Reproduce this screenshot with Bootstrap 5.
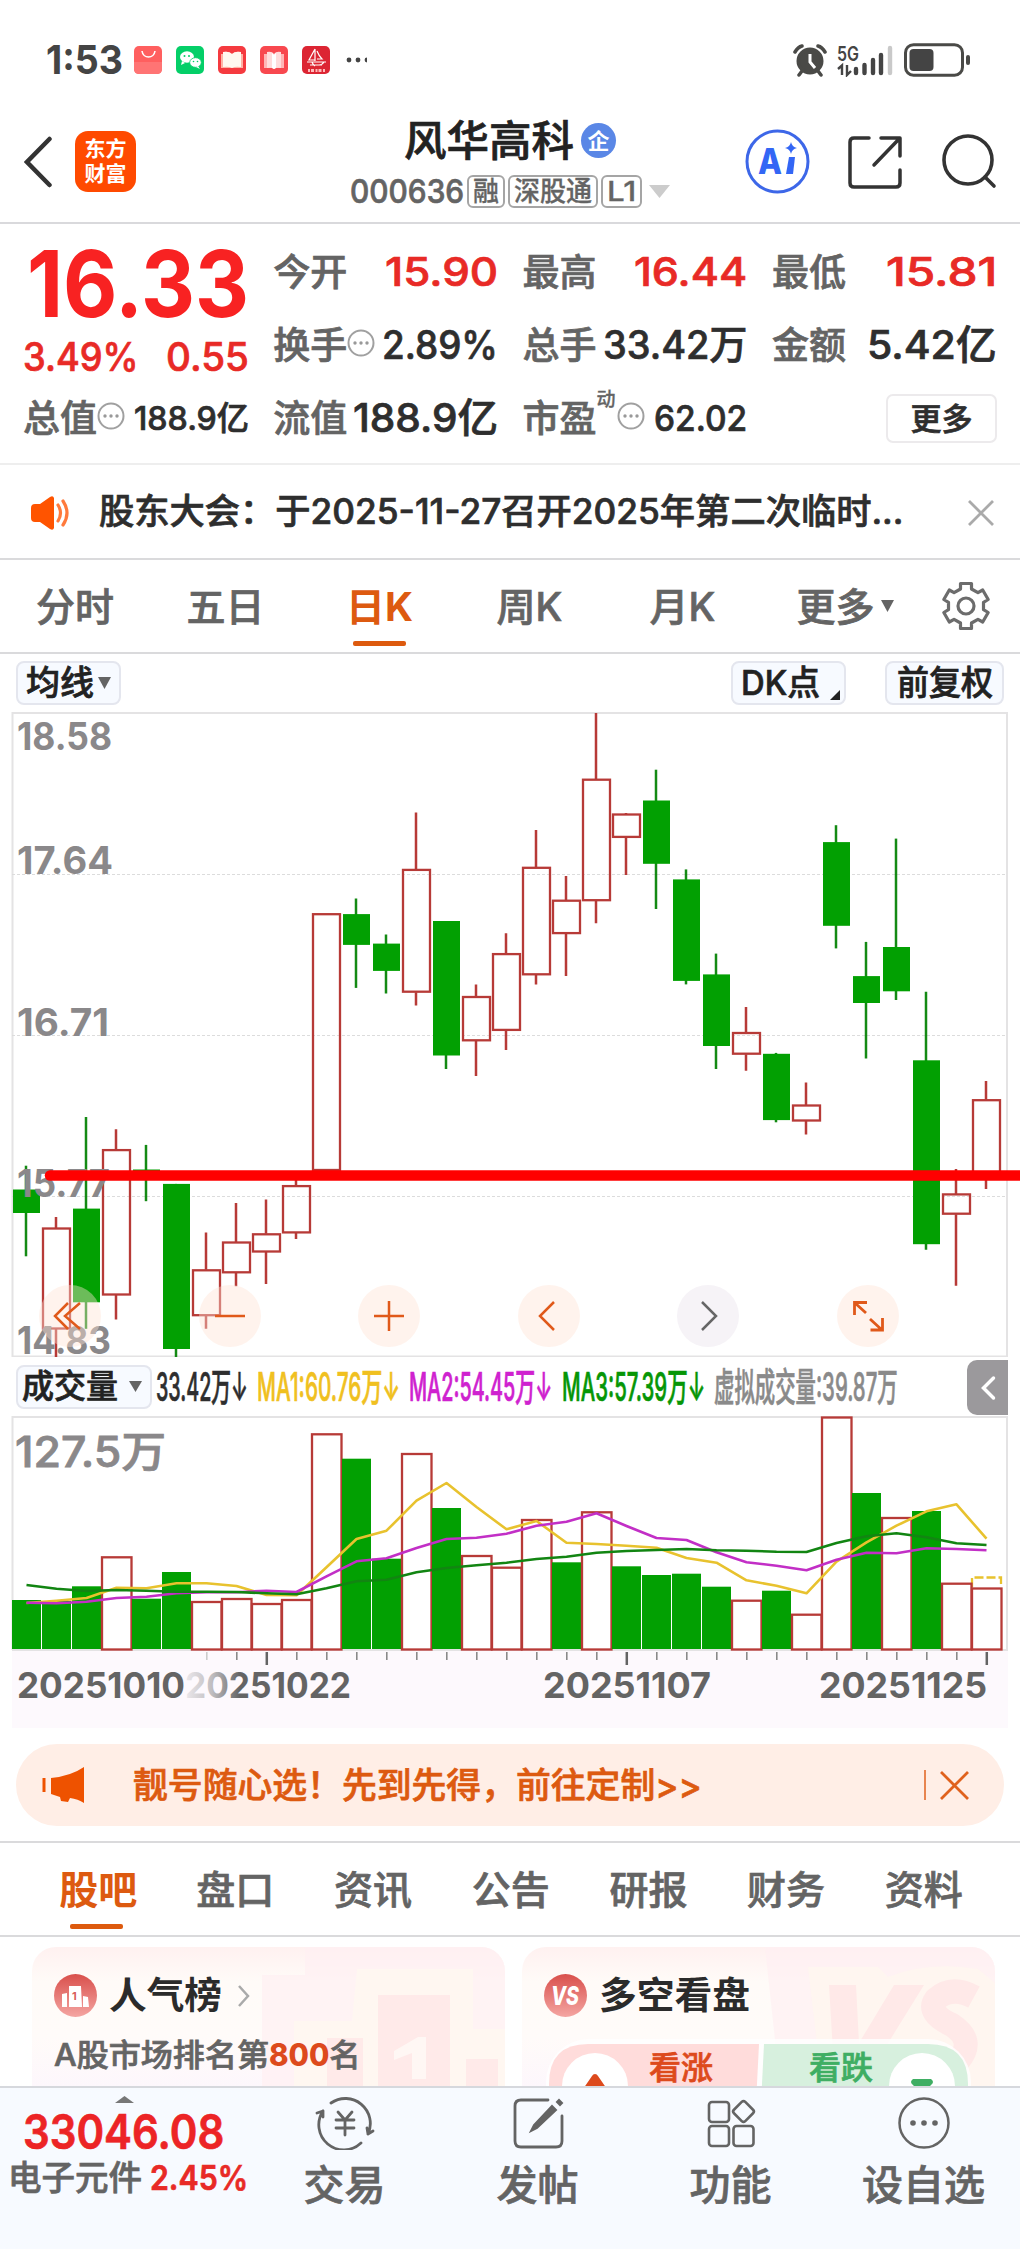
<!DOCTYPE html>
<html lang="zh-CN">
<head>
<meta charset="utf-8">
<meta name="viewport" content="width=device-width, initial-scale=1">
<title>风华高科 000636</title>
<link href="https://cdn.jsdelivr.net/npm/bootstrap@5.3.0/dist/css/bootstrap.min.css" rel="stylesheet">
<style>
body{width:1020px;height:2250px;overflow:hidden;background:#fff;color:#2e2e2e;font-family:Inter,"Noto Sans CJK SC",sans-serif;font-weight:500;line-height:1;-webkit-text-stroke:.7px currentColor}
svg,h2,.status,.fw-bold,.applogo,.ent,.big,.n800{-webkit-text-stroke:0}
.fit{display:inline-block;white-space:nowrap;transform-origin:0 50%;flex:none}
svg{display:block;flex:none}
.c-up{color:#e82a26}.c-grey{color:#646464}.c-orange{color:#dd5a10}
.status{height:100px;padding:19px 50px 0 46px;color:#444;font-size:40px;font-weight:700}
.topbar{height:124px;grid-template-columns:330px 360px 330px;border-bottom:2px solid #d9d9dc;padding-top:1px}
.applogo{width:61px;height:61px;border-radius:13px;background:#ff4a00;color:#fff;font-size:21px;font-weight:700;line-height:25px;margin-left:23px;padding-top:5px}
.namecol{padding-top:4px}
.stockname{font-size:42px;color:#222}
.ent{width:35px;height:35px;background:#5a87e6;color:#fff;font-size:22px;font-weight:700;margin-left:7px}
.code{font-size:33px;color:#646464;gap:3px;margin-top:13px}
.tagbox{height:33px;border:2px solid #a5a5a5;border-radius:6px;font-size:27px;-webkit-text-stroke-width:.3px}
.topicons{padding-right:23px}
.aiicon{margin-right:38px}.shareicon{margin-right:39px}
.quotes{height:241px;border-bottom:2px solid #eee;padding:16px 24px 0 23px}
.qgrid{grid-template-columns:226px 225px 225px 225px;column-gap:24.3px;grid-template-rows:64px 82px 64px}
.lbl{font-size:37px;color:#646464}.val{font-size:40px}.big{font-size:92px;font-weight:700;color:#f82222}
.fs-33{font-size:33px}.fs-36{font-size:36px}
.dyn{font-size:19px;color:#646464;margin-bottom:38px;width:21px;-webkit-text-stroke-width:.3px}
.dynicon{margin-left:-1px}
.morebtn{width:111px;height:49px;border:2px solid #eceaec;border-radius:7px;font-size:31px}
.notice{height:95px;border-bottom:2px solid #dadadc;padding:0 26px 0 30px;font-size:35px}
.notice svg{margin-top:3px}
.ktabs{height:94px;border-bottom:2px solid #dadadc;grid-template-columns:150px 151px 161px 135px 171px 154px 88px;font-size:39px;color:#646464}
.k-on{right:2px}
.moretab{gap:6px}
.barmark{position:absolute;bottom:6px;width:53px;height:5px;border-radius:2px;background:#dd5a0e}
.tools{height:53px;padding:7px 16px 0}
.pill{height:44px;background:#f7faff;border:2px solid #e4e6ee;border-radius:8px;font-size:34px;color:#222}
.dk{width:115px}.dkcorner{position:absolute;right:4px;bottom:3px}.qfq{width:119px;margin-left:39px}
.chartbtn{width:62px;height:62px;background:rgba(255,226,213,.42)}
.chartbtn.off{background:#f6f3f7}
.ctrls{position:absolute;left:39px;right:121px;top:577.5px}
.ind{height:59px;padding-left:16px;font-size:39px;gap:9px}
.volbtn{width:136px;font-size:33px}.volnow{margin-left:-5px}
.ma1{color:#f0c020}.ma2{color:#cf22cf}.ma3{color:#069606}.ma4{color:#8a8a8a}
.foldtab{width:41px;height:55px;background:#9b999c;border-radius:10px 0 0 10px;margin-right:12px;margin-top:2px}
.axis{fill:#8a888a;font-weight:700;font-size:38px}
.dates{fill:#646464;font-weight:700;font-size:36px}
.promo{height:82px;margin:7px 16px 15px;border-radius:41px;background:#ffeee6;font-size:35px;padding:0 34px 0 25px}
.promotext{margin-left:47px}
.ntabs{height:96px;border-top:2px solid #dadadc;border-bottom:2px solid #dadadc;grid-template-columns:166.5px repeat(6,137.7px);font-size:39px;color:#646464}
.n-on{padding-left:30px}.nb{left:70px}
.feed{height:149px;padding:10px 25px 0 32px;overflow:hidden}
.tile{width:473px;height:139px;border-radius:24px 24px 0 0;background:linear-gradient(#fff1f0,#fffbf8 35px,#fffbf9 90px,#fdf7fc 139px);overflow:hidden;padding:27px 22px 0}
.tile h2{font-size:37px;font-weight:700;margin:0 0 0 12px;line-height:43px;color:#2b2b2b}
.rankline{font-size:31px;margin-top:22px}
.n800{font-weight:800;color:#dd4a1c}
.deco{position:absolute;left:0;top:0}
.dock{height:163px;border-top:2px solid #d6d8dd;background:#f7faff;color:#646464}
.dockitem{width:193px;font-size:41px;padding-top:8px;gap:15px}
.idx{width:248px;padding-top:8px}.idxnum{font-size:48px;font-weight:600;color:#ec2426;margin-top:5px}
.idxsub{font-size:34px;margin-top:5px;gap:8px;padding-left:9px}.pct{font-weight:600}
</style>
</head>
<body>
<div class="status d-flex align-items-center">
  <span class="fit" data-w="77">1:53</span>
  <svg class="ms-2" width="236" height="30" viewBox="131 44 236 30">
    <rect x="134" y="45" width="28" height="28" rx="5" fill="#ff5f5f"/><path d="M134 61h28v7q0 5-5 5h-18q-5 0-5-5z" fill="#ff7474"/><path d="M142 50c1 8 12 8 13 0" fill="none" stroke="#fff" stroke-width="1.6"/>
    <rect x="176" y="45" width="28" height="28" rx="5" fill="#04cf68"/><ellipse cx="187" cy="56" rx="7" ry="5.8" fill="#fff"/><ellipse cx="195.500" cy="61.500" rx="5.800" ry="4.800" fill="#fff" stroke="#04cf68" stroke-width=".8"/><path d="M182 60l-1 4 4-2M198 65l2 3-4-2" fill="#fff"/><g fill="#04cf68"><circle cx="184.500" cy="55" r="1"/><circle cx="189" cy="55" r="1"/><circle cx="193.500" cy="60.500" r=".8"/><circle cx="197.500" cy="60.500" r=".8"/></g>
    <rect x="218" y="45" width="28" height="28" rx="5" fill="#f53a3f"/><path d="M221 53h3v-2q5-1 8 2 3-3 8-2v2h3v14h-22z" fill="#ffb3a5"/><path d="M223 51q6-1 9 2 3-3 9-2v15q-6-1-9 1-3-2-9-1z" fill="#fff8ef"/>
    <rect x="260" y="45" width="28" height="28" rx="5" fill="#f8484f"/><path d="M264 53h20v14h-20z" fill="#ffb6b6"/><path d="M267 51q5-1 7 2 2-3 7-2v16q-5-1-7 1-2-2-7-1z" fill="#ffdcdc"/><path d="M272 52l2 2 2-2v15l-2 1-2-1z" fill="#fff"/>
    <rect x="302" y="45" width="28" height="28" rx="5" fill="#dc2533"/><path d="M315 48v12M315 48l-6 11h6M317 50q2 5 5 8h-5M307 61h19M310 64h12M312 61q1 3 3 4M319 64q3 0 5-3" fill="none" stroke="#fff" stroke-width="1.200"/><path d="M308 69.500h17" stroke="#ffb9b9" stroke-width="3" stroke-dasharray="2 1 3 1.500"/>
    <g fill="#444"><circle cx="349" cy="59" r="2.400"/><circle cx="358" cy="59" r="2.400"/><circle cx="367" cy="59" r="2.400"/></g>
  </svg>
  <svg class="ms-auto" width="178" height="34" viewBox="791 42 178 34">
    <circle cx="809" cy="60" r="11" fill="none" stroke="#4a4a47" stroke-width="5"/><circle cx="809" cy="60" r="10" fill="#4a4a47"/><path d="M809 53v8l5 6" fill="none" stroke="#fff" stroke-width="3"/><path d="M794 51q3-5 7-6M824 51q-3-5-7-6M801 70l-3 4M817 70l3 4" stroke="#4a4a47" stroke-width="3.500" fill="none" stroke-linecap="round"/>
    <text x="836" y="59.500" font-size="20" font-weight="600" fill="#444" textLength="22" lengthAdjust="spacingAndGlyphs">5G</text>
    <path d="M837 68l4-3.500V74M850 70l-4 4V64" stroke="#444" stroke-width="2.400" fill="none"/>
    <g stroke="#444" stroke-width="4.400" stroke-linecap="round"><path d="M855 68v4M863.500 64v8M872 59v13M880 54v18"/><path d="M889 47v25" stroke="#c9c9c9"/></g>
    <rect x="904.500" y="43.700" width="57" height="30.500" rx="8" fill="none" stroke="#4a4a47" stroke-width="3"/><rect x="908.500" y="48" width="24" height="22" rx="4" fill="#444"/><path d="M967 56v6" stroke="#4a4a47" stroke-width="4" stroke-linecap="round"/>
  </svg>
</div>

<header class="topbar d-grid align-items-center">
  <div class="d-flex align-items-center ps-4">
    <svg width="28" height="52" viewBox="0 0 28 52"><path d="M25.500 3L3 26l22.500 23" fill="none" stroke="#333" stroke-width="4.500" stroke-linecap="round"/></svg>
    <div class="applogo text-center">东方<br>财富</div>
  </div>
  <div class="namecol d-flex flex-column align-items-center">
    <div class="d-flex align-items-center"><span class="fit stockname" data-w="170">风华高科</span><span class="ent rounded-circle d-flex align-items-center justify-content-center">企</span></div>
    <div class="code d-flex align-items-center"><span class="fit" data-w="114">000636</span><span class="tagbox d-flex align-items-center px-1"><span class="fit" data-w="26">融</span></span><span class="tagbox d-flex align-items-center px-1"><span class="fit" data-w="78">深股通</span></span><span class="tagbox d-flex align-items-center px-1"><span class="fit" data-w="29">L1</span></span>
    <svg class="ms-1" width="21" height="13" viewBox="0 0 21 13"><path d="M0 0h21L10.500 13z" fill="#ccc"/></svg></div>
  </div>
  <div class="topicons d-flex align-items-center justify-content-end">
    <svg class="aiicon" width="65" height="65" viewBox="0 0 65 65"><circle cx="32.500" cy="32.500" r="30.500" fill="none" stroke="#3d67e8" stroke-width="3"/><text x="13" y="45" font-size="35" font-weight="800" fill="#3366f5" textLength="24" lengthAdjust="spacingAndGlyphs">A</text><path d="M44 28h6l-2 17h-7z" fill="#3366f5"/><path d="M46 13q1 5 6 6-5 1-6 6-1-5-6-6 5-1 6-6z" fill="#3366f5"/></svg>
    <svg class="shareicon" width="54" height="54" viewBox="0 0 54 54" fill="none" stroke="#333" stroke-width="3.500" stroke-linecap="round" stroke-linejoin="round"><path d="M21 3H6Q2 3 2 7v41q0 4 4 4h42q4 0 4-4V35M33 3h19v18M51 4L26 30"/></svg>
    <svg width="56" height="56" viewBox="0 0 56 56" fill="none" stroke="#333" stroke-width="3.600" stroke-linecap="round"><circle cx="27" cy="26" r="24"/><path d="M44 43l9 9"/></svg>
  </div>
</header>

<section class="quotes">
  <div class="qgrid d-grid align-items-center">
    <div class="d-flex ps-1"><span class="fit big mt-4" data-w="222">16.33</span></div>
    <div class="d-flex align-items-center justify-content-between"><span class="fit lbl" data-w="74">今开</span><span class="fit val c-up" data-w="113">15.90</span></div>
    <div class="d-flex align-items-center justify-content-between"><span class="fit lbl" data-w="74">最高</span><span class="fit val c-up" data-w="113">16.44</span></div>
    <div class="d-flex align-items-center justify-content-between"><span class="fit lbl" data-w="74">最低</span><span class="fit val c-up" data-w="111">15.81</span></div>

    <div class="d-flex align-items-center justify-content-between c-up val pt-4"><span class="fit" data-w="116">3.49%</span><span class="fit" data-w="83">0.55</span></div>
    <div class="d-flex align-items-center justify-content-between"><span class="d-flex align-items-center"><span class="fit lbl" data-w="74">换手</span><svg class="mb-1" width="28" height="28" viewBox="0 0 28 28"><use href="#info"/></svg></span><span class="fit val" data-w="116">2.89%</span></div>
    <div class="d-flex align-items-center justify-content-between"><span class="fit lbl" data-w="74">总手</span><span class="fit val" data-w="144">33.42万</span></div>
    <div class="d-flex align-items-center justify-content-between"><span class="fit lbl" data-w="74">金额</span><span class="fit val" data-w="130">5.42亿</span></div>

    <div class="d-flex align-items-center justify-content-between"><span class="d-flex align-items-center"><span class="fit lbl" data-w="74">总值</span><svg class="mb-1" width="28" height="28" viewBox="0 0 28 28"><g id="info"><circle cx="14" cy="14" r="12.500" fill="none" stroke="#a0a0a0" stroke-width="2"/><g fill="#999"><circle cx="8" cy="14" r="1.700"/><circle cx="14" cy="14" r="1.700"/><circle cx="20" cy="14" r="1.700"/></g></g></svg></span><span class="fit fs-33" data-w="115">188.9亿</span></div>
    <div class="d-flex align-items-center justify-content-between"><span class="fit lbl" data-w="74">流值</span><span class="fit val" data-w="145">188.9亿</span></div>
    <div class="d-flex align-items-center justify-content-between"><span class="d-flex align-items-center"><span class="fit lbl" data-w="74">市盈</span><span class="dyn">动</span><svg class="mb-1 dynicon" width="28" height="28" viewBox="0 0 28 28"><use href="#info"/></svg></span><span class="fit fs-36" data-w="93">62.02</span></div>
    <div class="d-flex justify-content-end"><span class="morebtn d-flex align-items-center justify-content-center">更多</span></div>
  </div>
</section>

<section class="notice d-flex align-items-center">
  <svg width="41" height="36" viewBox="0 0 41 36"><path d="M1 13q0-4 4-4h5L20 2q3-2 4 1v30q-1 3-4 1l-10-7H5q-4 0-4-4z" fill="#ff5400"/><path d="M28 10q5 8 0 16M33 6q8 12 0 24" fill="none" stroke="#ff7a3c" stroke-width="3.200" stroke-linecap="round"/></svg>
  <span class="fit ms-4" data-w="809"><span class="ps-1">股东大会：于2025-11-27召开2025年第二次临时...</span></span>
  <svg class="ms-auto" width="26" height="26" viewBox="0 0 26 26"><path d="M1 1l24 24M25 1L1 25" stroke="#aaa" stroke-width="2.800"/></svg>
</section>

<nav class="ktabs d-grid align-items-center text-center">
  <span>分时</span><span>五日</span>
  <span class="k-on c-orange position-relative h-100 d-flex align-items-center justify-content-center"><b class="fw-bold">日K</b><i class="barmark"></i></span>
  <span>周K</span><span>月K</span>
  <span class="moretab d-flex align-items-center justify-content-center">更多<svg width="13" height="12" viewBox="0 0 13 12"><path d="M0 0h13L6.500 12z" fill="#646464"/></svg></span>
  <svg class="mx-auto" width="52" height="52" viewBox="-26 -26 52 52" fill="none" stroke="#6c6c6c" stroke-width="3.200" stroke-linejoin="round"><path d="M-5.500-17V-22.500H5.500V-17L11.950-13.300 16.700-16 22.200-6.500 17.500-3.700V3.700L22.200 6.500 16.700 16 11.950 13.300 5.500 17V22.500H-5.500V17L-11.950 13.300-16.700 16-22.200 6.500-17.500 3.700V-3.700L-22.200-6.500-16.700-16-11.950-13.300z"/><circle r="8"/></svg>
</nav>

<div class="tools d-flex align-items-start">
  <span class="pill d-flex align-items-center ps-2 pe-2"><span class="fit" data-w="68">均线</span><svg class="ms-1" width="13" height="12" viewBox="0 0 13 12"><path d="M0 0h13L6.500 12z" fill="#646464"/></svg></span>
  <span class="pill d-flex align-items-center ms-auto ps-2 position-relative dk"><span class="fit" data-w="79">DK点</span><svg class="dkcorner" width="10" height="10" viewBox="0 0 10 10"><path d="M10 0v10H0z" fill="#222"/></svg></span>
  <span class="pill d-flex align-items-center justify-content-center qfq"><span class="fit" data-w="96">前复权</span></span>
</div>

<div class="position-relative">
  <svg id="kline" width="1020" height="650" viewBox="0 708 1020 650"></svg>
  <div class="ctrls d-flex justify-content-between">
    <span class="chartbtn rounded-circle"><svg width="62" height="62" viewBox="0 0 62 62" fill="none" stroke="#e0591a" stroke-width="2.500"><path d="M29 18L16 31l13 13M41 18L26 31l15 13"/></svg></span>
    <span class="chartbtn rounded-circle"><svg width="62" height="62" viewBox="0 0 62 62" fill="none" stroke="#e0591a" stroke-width="2.500"><path d="M16 31h30"/></svg></span>
    <span class="chartbtn rounded-circle"><svg width="62" height="62" viewBox="0 0 62 62" fill="none" stroke="#e0591a" stroke-width="2.500"><path d="M16 31h30M31 16v30"/></svg></span>
    <span class="chartbtn rounded-circle"><svg width="62" height="62" viewBox="0 0 62 62" fill="none" stroke="#e0591a" stroke-width="2.500"><path d="M36 17L22 31l14 14"/></svg></span>
    <span class="chartbtn off rounded-circle"><svg width="62" height="62" viewBox="0 0 62 62" fill="none" stroke="#666" stroke-width="2.500"><path d="M25 17l14 14-14 14"/></svg></span>
    <span class="chartbtn rounded-circle"><svg width="62" height="62" viewBox="0 0 62 62" fill="none" stroke="#e0591a" stroke-width="2.800"><path d="M30 17.500H17.500V30M18 18l11 10M33.500 45H45.500V33M45 45L33 34"/></svg></span>
  </div>
</div>

<div class="ind d-flex align-items-center">
  <span class="pill d-flex align-items-center px-1 volbtn"><span class="fit" data-w="96">成交量</span><svg class="ms-auto me-1" width="13" height="11" viewBox="0 0 13 11"><path d="M0 0h13L6.500 11z" fill="#646464"/></svg></span>
  <span class="fit volnow" data-w="92">33.42万↓</span>
  <span class="fit ma1" data-w="143">MA1:60.76万↓</span>
  <span class="fit ma2" data-w="143">MA2:54.45万↓</span>
  <span class="fit ma3" data-w="143">MA3:57.39万↓</span>
  <span class="fit ma4" data-w="184">虚拟成交量:39.87万</span>
  <span class="foldtab ms-auto d-flex align-items-center justify-content-center"><svg width="16" height="26" viewBox="0 0 16 26"><path d="M13.500 3L3.500 13l10 10" fill="none" stroke="#fff" stroke-width="3.500" stroke-linecap="round"/></svg></span>
</div>

<svg id="vol" width="1020" height="321" viewBox="0 1417 1020 321"></svg>

<div class="promo d-flex align-items-center c-orange">
  <svg width="45" height="38" viewBox="0 0 45 38"><path d="M10 12Q30 10 43 1v36q-6-4-14-5l-2 4-7-1-1-4-9-3z" fill="#ee5200"/><path d="M3 12v14" stroke="#ee5200" stroke-width="3"/></svg>
  <span class="fit promotext" data-w="569">靓号随心选！先到先得，前往定制&gt;&gt;</span>
  <svg class="ms-auto" width="46" height="32" viewBox="0 0 46 32" fill="none" stroke="#e0611c"><path d="M1 1v30" stroke-width="1.500"/><path d="M17 3l27 27M44 3L17 30" stroke-width="2.800"/></svg>
</div>

<nav class="ntabs d-grid align-items-center text-center">
  <span class="n-on c-orange position-relative h-100 d-flex align-items-center justify-content-center"><b class="fw-bold">股吧</b><i class="barmark nb"></i></span>
  <span>盘口</span><span>资讯</span><span>公告</span><span>研报</span><span>财务</span><span>资料</span>
</nav>

<section class="feed d-flex justify-content-between">
  <div class="tile position-relative">
    <svg class="deco" width="473" height="139" viewBox="0 0 473 139"><path d="M273 0h200v139H230V28h43z" fill="#ffeff2" opacity=".7"/><path d="M325 22h116v60h32v57H262V74h58z" fill="#fff7f1"/><path d="M346 48h72v92h-72zM295 91h36v50h-36zM434 112h32v30h-32z" fill="#ffeae9"/><path d="M362 104l24-14h8v42h-14v-26l-18 7z" fill="#fff7f4"/></svg>
    <div class="position-relative d-flex align-items-center">
      <svg width="43" height="43" viewBox="0 0 43 43"><defs><linearGradient id="rd" x2="0" y2="1"><stop stop-color="#d9504c"/><stop offset="1" stop-color="#f4a5a2"/></linearGradient></defs><circle cx="21.500" cy="21.500" r="21.500" fill="url(#rd)"/><path d="M8 20l5-1v14H8zM15 12h12l1 21H15zM29 22l5 1 1 10h-6z" fill="#fff"/><text x="18" y="26" font-size="11" font-weight="700" fill="#d9605c">1</text></svg>
      <h2><span class="fit" data-w="113">人气榜</span></h2>
      <svg class="ms-3" width="12" height="22" viewBox="0 0 12 22"><path d="M1 1l9 10-9 10" fill="none" stroke="#aaa" stroke-width="2.500"/></svg>
    </div>
    <div class="rankline position-relative c-grey d-flex align-items-center"><span class="fit" data-w="215">A股市场排名第</span><span class="fit n800" data-w="60">800</span><span class="fit" data-w="31">名</span></div>
  </div>
  <div class="tile position-relative">
    <svg class="deco" width="473" height="139" viewBox="0 0 473 139"><path d="M243 0h230v139H258z" fill="#ffeff2" opacity=".7"/><path d="M286 20l70 0 10 10q40-16 90-8l17 14v104H300z" fill="#fff6ef" opacity=".8"/><path d="M307 38h27l3 58 35-58h30l-52 84h-38z" fill="#ffe9e8"/><path d="M452 50q-22-12-38 2-10 14 16 26 24 16 6 36" fill="none" stroke="#ffe9e8" stroke-width="24"/>
      <rect x="24" y="92" width="425" height="90" rx="43" fill="#fff" opacity=".8"/><path d="M66 97H237l-4 80H27v-40q0-40 39-40z" fill="#ffdcdb"/><path d="M242 97H406q40 0 40 40v40H238z" fill="#d7f0de"/><circle cx="73" cy="139" r="33" fill="#fff"/><circle cx="400" cy="139" r="33" fill="#fff"/><path d="M73 127q2 0 3 2l11 16H59l11-16q1-2 3-2z" fill="#dd4a1c"/><path d="M391 132h18q4 3 0 6l-9 10-9-10q-4-3 0-6z" fill="#3fae63"/>
      <g font-size="32" stroke-width=".7"><text x="127" y="132" fill="#dd4a1c" stroke="#dd4a1c">看涨</text><text x="287" y="132" fill="#3fae63" stroke="#3fae63">看跌</text></g></svg>
    <div class="position-relative d-flex align-items-center">
      <svg width="43" height="43" viewBox="0 0 43 43"><circle cx="21.500" cy="21.500" r="21.500" fill="url(#rd)"/><text x="7" y="31" font-size="26" font-style="italic" font-weight="800" fill="#fff" textLength="28" lengthAdjust="spacingAndGlyphs">VS</text></svg>
      <h2><span class="fit" data-w="151">多空看盘</span></h2>
    </div>
  </div>
</section>

<footer class="dock d-flex">
  <div class="idx d-flex flex-column align-items-center">
    <svg width="19" height="7" viewBox="0 0 19 7"><path d="M0 7L9.500 0 19 7z" fill="#777"/></svg>
    <span class="fit idxnum" data-w="201">33046.08</span>
    <span class="d-flex align-items-center idxsub"><span class="fit" data-w="134">电子元件</span><span class="fit c-up pct" data-w="98">2.45%</span></span>
  </div>
  <div class="dockitem d-flex flex-column align-items-center">
    <svg width="60" height="54" viewBox="-30 -27 60 54" fill="none" stroke="#646464" stroke-width="2.800" stroke-linecap="round" stroke-linejoin="round"><path d="M-14-20A25 25 0 0 1 23 11l5-3M23 11l-1-6M16 20A25 25 0 0 1-22-12l-6 2M-22-12l0 6"/><path d="M-7-11L0-3 7-11M-9-3H9M-9 5H9M0-3V12"/></svg><span>交易</span></div>
  <div class="dockitem d-flex flex-column align-items-center">
    <svg width="54" height="54" viewBox="0 0 54 54" fill="none" stroke="#646464" stroke-width="2.800" stroke-linecap="round"><path d="M37 4H10Q4 4 4 10v35q0 6 6 6h35q6 0 6-6V20"/><path d="M41 10l4 4L26 32l-6 3 3-6zM46 6l2-2 3 3-2 2z" fill="#646464" stroke-width="2"/></svg><span>发帖</span></div>
  <div class="dockitem d-flex flex-column align-items-center">
    <svg width="54" height="54" viewBox="0 0 54 54" fill="none" stroke="#646464" stroke-width="2.600"><rect x="5" y="6" width="20" height="20" rx="3"/><rect x="5" y="30" width="20" height="20" rx="3"/><rect x="29.500" y="30" width="20" height="20" rx="3"/><rect x="31.500" y="7.500" width="16" height="16" rx="2.500" transform="rotate(45 39.500 15.500)"/></svg><span>功能</span></div>
  <div class="dockitem d-flex flex-column align-items-center">
    <svg width="54" height="54" viewBox="-27 -27 54 54"><circle r="24.500" fill="none" stroke="#646464" stroke-width="2.500"/><g fill="#646464"><circle cx="-11" r="2.800"/><circle r="2.800"/><circle cx="11" r="2.800"/></g></svg><span>设自选</span></div>
</footer>

<script src="https://cdn.jsdelivr.net/npm/bootstrap@5.3.0/dist/js/bootstrap.bundle.min.js"></script>
<script>
// Candles: [up, high, body top, body bottom, low]
const K=[[0,1166.7,1190.5,1214,1257.3],[1,1217.9,1229,1330,1358],[0,1118,1209.6,1303.3,1329.8],[1,1130.2,1150.6,1296,1320.6],[0,1145.9,1170.5,1172,1202.2],[0,1184.9,1184.9,1350,1358],[1,1233.5,1270.8,1316.7,1329.7],[1,1204,1243,1273.8,1287.2],[1,1200.5,1234.8,1253,1285],[1,1175,1186.6,1233.9,1240],[1,914.7,914.7,1171.5,1171.5],[0,899.5,915.1,945.9,988.9],[0,935.5,944.6,971.9,994.5],[1,813.6,870.4,993.2,1006.6],[0,922,922,1056.5,1070],[1,985.4,997.5,1041.8,1076.9],[1,934.2,954.6,1031.4,1050.9],[1,831,868.3,975.8,985.4],[1,877,901.2,934.6,977],[1,714,780.2,901.7,924.2],[1,814,815,838.4,876],[0,770.7,801.5,864.8,910],[0,870.4,880.4,981.9,985.4],[0,954.6,975.4,1047,1070],[1,1008,1033.5,1055.2,1071.7],[0,1053.9,1054.8,1121.1,1123.3],[1,1083.4,1106,1122,1135.4],[0,826.2,843.1,926.8,949.4],[0,942.9,977.1,1004,1059.5],[0,839.6,948,992.3,1001],[0,992.7,1061.3,1245.2,1250.8],[1,1170,1194.9,1215.2,1286.8],[1,1082,1100.7,1178,1190]];
const V=[1601,1602,1587.3,1557.3,1599.7,1573,1602,1599,1604,1600,1434.3,1459.7,1559.7,1454,1509,1556,1567.7,1520,1563.3,1512.3,1567.3,1576,1574.7,1587.7,1600.7,1591.7,1614.7,1417.5,1494,1518,1512,1583.7,1588.5];
const M=[['#e8c22e',[1604,1601.7,1599,1588.7,1589.3,1584.3,1584.3,1587,1596,1596.3,1568.3,1540,1531.7,1501.7,1484,1508,1530.3,1522,1543.7,1545,1546.7,1548.7,1559,1563.7,1581.3,1586.7,1594.3,1562.7,1543.3,1526.7,1512.3,1505.3,1539.7]],
['#c22fc6',[1603.7,1604.3,1602.7,1599,1597.7,1594.3,1593.3,1593.3,1591.7,1593,1577.3,1562.3,1559.3,1549,1540,1538.7,1534.7,1526.7,1522.7,1514.3,1527,1539,1541,1553.3,1563.3,1566.7,1571.3,1560.7,1553.7,1554.3,1549.3,1550,1551.3]],
['#128512',[1586,1589.7,1592,1591,1591.7,1592.7,1592.7,1593,1594.3,1595.3,1589.3,1582.3,1580.7,1573.3,1569,1566.3,1563.7,1560,1557.7,1553.7,1552,1551,1550,1551.3,1551.7,1552.7,1553,1544,1537.3,1534.3,1538.3,1544.3,1546]]];
const R='#b73a37',G='#02a002',cx=i=>26+30*i;
let s='<path d="M12.500 1358V714H1007V1358M12 1357.500H1008" fill="none" stroke="#e4e3e4" stroke-width="2"/>';
for(const y of [875.5,1036.5,1197.500]) s+=`<path d="M12 ${y}H1007" stroke="#dcdcdc" stroke-dasharray="3 2"/>`;
s+=K.map(([up,h,t,b,l],i)=>{const x=cx(i);return up?
 `<path d="M${x} ${h}V${t}M${x} ${b}V${l}" stroke="${R}" stroke-width="2.500"/><rect x="${x-13}" y="${t+.5}" width="27" height="${b-t-1}" fill="none" stroke="${R}" stroke-width="2.300"/>`:
 `<path d="M${x} ${h}V${l}" stroke="#148a14" stroke-width="2.500"/><rect x="${x-13}" y="${t}" width="27" height="${b-t}" fill="${G}"/>`}).join('');
[['18.58',751,95],['17.64',875,96],['16.71',1037,92],['15.77',1197.5,93],['14.83',1355,94]].forEach(([t,y,w])=>s+=`<text class="axis" x="17" y="${y}" textLength="${w}" lengthAdjust="spacingAndGlyphs">${t}</text>`);
s+='<path d="M50 1176.500H1030" stroke="#f00" stroke-width="10.500" stroke-linecap="round"/>';
kline.innerHTML=s;

const ups=[3,6,7,8,9,10,13,15,16,17,19,24,26,27,29,31,32];
let v='<defs><linearGradient id="fade" gradientUnits="userSpaceOnUse" x1="184" y1="0" x2="240" y2="0"><stop stop-color="#646464" stop-opacity=".1"/><stop offset=".5" stop-color="#646464" stop-opacity=".4"/><stop offset="1" stop-color="#646464"/></linearGradient></defs><rect x="12" y="1651" width="996" height="78" fill="#fdf9fd"/><path d="M12.500 1651V1418H1007V1651H12" fill="none" stroke="#e4e3e4" stroke-width="2"/>';
v+='<text x="15" y="1468" font-size="42" fill="#8a888a" stroke="#8a888a" stroke-width=".8" textLength="151" lengthAdjust="spacingAndGlyphs">127.5万</text>';
v+='<path d="M972 1588V1578.500H1001V1588" fill="none" stroke="#e8c22e" stroke-width="2.300" stroke-dasharray="9 3"/>';
V.forEach((t,i)=>{const x=cx(i);
 v+=ups.includes(i)?`<rect x="${x-14}" y="${t+1}" width="29.500" height="${1649.500-t}" fill="#fff" stroke="${R}" stroke-width="2.300"/>`:`<rect x="${x-14}" y="${t}" width="29" height="${1650-t}" fill="${G}"/>`;});
M.forEach(([c,a])=>v+=`<polyline points="${a.map((y,i)=>cx(i)+.5+','+y).join(' ')}" fill="none" stroke="${c}" stroke-width="2.600" stroke-linejoin="round"/>`);
for(let i=6;i<33;i++){const big=[8,20,32].includes(i);v+=`<path d="M${cx(i)+.8} 1653v${big?13:8}" stroke="${i===6?'#ccc':big?'#646464':'#8a8a8a'}" stroke-width="${big?2.500:1.600}"/>`;}
[['20251010',17,'#646464',168],['20251022',185,'url(#fade)',166],['20251107',543,'#646464',168],['20251125',819,'#646464',168]].forEach(([t,x,f,w])=>v+=`<text class="dates" style="fill:${f}" x="${x}" y="1699" textLength="${w}" lengthAdjust="spacingAndGlyphs">${t}</text>`);
vol.innerHTML=v;

// Set every .fit label to its column width, keeping the flow in step
document.fonts.ready.then(()=>document.querySelectorAll('.fit').forEach(e=>{
 const n=e.offsetWidth,w=+e.dataset.w;e.style.transform=`scaleX(${w/n})`;e.style.marginRight=(w-n)+'px';}));
</script>
</body>
</html>
